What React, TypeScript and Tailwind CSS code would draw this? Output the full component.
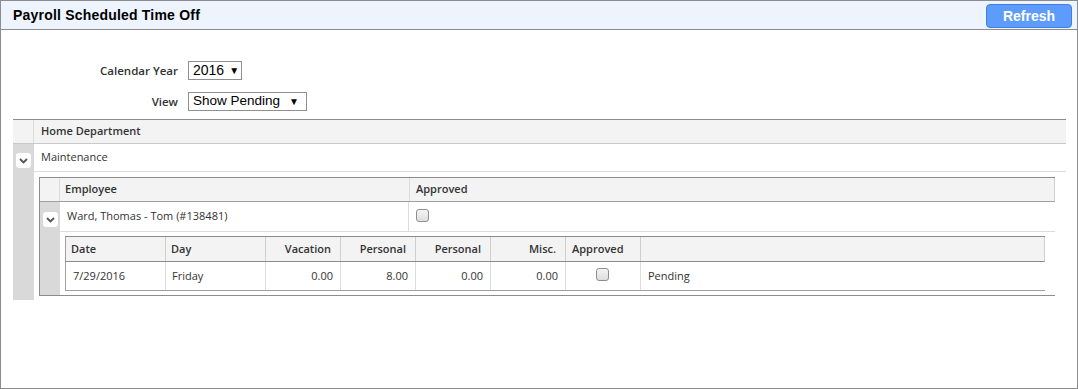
import React from "react";

const Chevron = ({ className }: { className: string }) => (
  <div className={`w-[15px] h-[15px] rounded-[3px] bg-white flex items-center justify-center ${className}`}>
    <svg width="9" height="6" viewBox="0 0 9 6">
      <path d="M1 1 L4.5 4.5 L8 1" fill="none" stroke="#555" strokeWidth="1.8" />
    </svg>
  </div>
);

const Checkbox = () => (
  <span className="inline-block w-[13px] h-[13px] rounded-[3px] border border-[#8f8f8f] bg-gradient-to-b from-[#f4f4f4] to-[#dedede]" />
);

export default function App() {
  const sans = "font-['Open_Sans',sans-serif]";
  const arial = "font-['Liberation_Sans',Arial,sans-serif]";
  return (
    <div className={`w-[1078px] h-[389px] border border-[#8c8c8c] bg-white overflow-hidden ${sans} text-[11px] text-[#333]`}>
      {/* header */}
      <div className="h-[29px] bg-[#edf4fe] border-b border-[#8c8c8c] flex items-start justify-between pl-[12px] pr-[5px]">
        <span className={`${arial} font-bold text-[14px] tracking-[0.2px] text-black leading-[29px]`}>Payroll Scheduled Time Off</span>
        <button className={`${arial} mt-[3px] w-[86px] h-[24px] rounded-[4px] bg-[#5e9cfb] border border-[#3f7fe6] text-white font-bold text-[14px] leading-[20px]`}>
          Refresh
        </button>
      </div>

      {/* form */}
      <div className="pt-[31px]">
        <div className="flex items-center">
          <div className="w-[177px] text-right font-semibold text-[11.5px]">Calendar Year</div>
          <div className={`${arial} ml-[10px] h-[19px] w-[54px] border border-[#8f8f8f] flex items-center pl-[4px] text-[14px] text-black`}>
            <span>2016</span>
            <span className="ml-[5px] text-[10px]">▼</span>
          </div>
        </div>
        <div className="flex items-center mt-[12px]">
          <div className="w-[177px] text-right font-semibold text-[11.5px]">View</div>
          <div className={`${arial} ml-[10px] h-[19px] w-[119px] border border-[#8f8f8f] flex items-center justify-between pl-[4px] pr-[7px] text-[13.5px] text-black`}>
            <span>Show Pending</span>
            <span className="text-[10px]">▼</span>
          </div>
        </div>
      </div>

      {/* outer grid */}
      <div className="mt-[8px] ml-[12px] mr-[11px]">
        <div className="h-[25px] border-t border-b border-t-[#8c8c8c] border-b-[#c8c8c8] bg-[#f3f3f3] flex">
          <div className="w-[21px] border-r border-[#dcdcdc]" />
          <div className="pl-[7px] font-semibold flex items-center">Home Department</div>
        </div>
        <div className="flex h-[28px]">
          <div className="w-[21px] bg-[#d9d9d9] pl-[3px] pt-[9px]">
            <Chevron className="" />
          </div>
          <div className="flex-1 border-b border-[#dcdcdc] pl-[7px] flex items-center">Maintenance</div>
        </div>
        <div className="flex">
          <div className="w-[21px] bg-[#d9d9d9]" />
          <div className="flex-1 pl-[5px] pr-[11px] pt-[5px] pb-[4px]">
            {/* inner grid */}
            <div className="border-l border-t border-b border-[#8c8c8c]">
              <div className="h-[24px] border-b border-[#a0a0a0] bg-[#f3f3f3] flex border-r border-r-[#cfcfcf]">
                <div className="w-[20px] border-r border-[#dcdcdc]" />
                <div className="w-[350px] border-r border-[#dcdcdc] pl-[5px] font-semibold flex items-center">Employee</div>
                <div className="pl-[6px] font-semibold flex items-center">Approved</div>
              </div>
              <div className="flex h-[30px]">
                <div className="w-[20px] bg-[#d9d9d9] pl-[3px] pt-[10px]">
                  <Chevron className="" />
                </div>
                <div className="flex-1 flex border-b border-[#dcdcdc]">
                  <div className="w-[349px] border-r border-[#dcdcdc] pl-[7px] flex items-center">Ward, Thomas - Tom (#138481)</div>
                  <div className="pl-[7px] pt-[7px]"><Checkbox /></div>
                </div>
              </div>
              <div className="flex">
                <div className="w-[20px] bg-[#d9d9d9]" />
                <div className="flex-1 pl-[5px] pr-[10px] pt-[4px] pb-[4px]">
                  {/* innermost grid */}
                  <div className="border-l border-t border-b border-l-[#a0a0a0] border-t-[#8c8c8c] border-b-[#a0a0a0]">
                    <div className="h-[25px] border-b border-[#8c8c8c] bg-[#f3f3f3] flex border-r border-r-[#cfcfcf] font-semibold">
                      <div className="w-[100px] border-r border-[#cfcfcf] pl-[5px] flex items-center">Date</div>
                      <div className="w-[100px] border-r border-[#cfcfcf] pl-[5px] flex items-center">Day</div>
                      <div className="w-[75px] border-r border-[#cfcfcf] pr-[9px] flex items-center justify-end">Vacation</div>
                      <div className="w-[75px] border-r border-[#cfcfcf] pr-[9px] flex items-center justify-end">Personal</div>
                      <div className="w-[75px] border-r border-[#cfcfcf] pr-[9px] flex items-center justify-end">Personal</div>
                      <div className="w-[75px] border-r border-[#cfcfcf] pr-[9px] flex items-center justify-end">Misc.</div>
                      <div className="w-[75px] border-r border-[#cfcfcf] pl-[6px] flex items-center">Approved</div>
                      <div className="flex-1" />
                    </div>
                    <div className="h-[28px] flex">
                      <div className="w-[100px] border-r border-[#dcdcdc] pl-[7px] flex items-center">7/29/2016</div>
                      <div className="w-[100px] border-r border-[#dcdcdc] pl-[6px] flex items-center">Friday</div>
                      <div className="w-[75px] border-r border-[#dcdcdc] pr-[7px] flex items-center justify-end">0.00</div>
                      <div className="w-[75px] border-r border-[#dcdcdc] pr-[7px] flex items-center justify-end">8.00</div>
                      <div className="w-[75px] border-r border-[#dcdcdc] pr-[7px] flex items-center justify-end">0.00</div>
                      <div className="w-[75px] border-r border-[#dcdcdc] pr-[7px] flex items-center justify-end">0.00</div>
                      <div className="w-[75px] border-r border-[#dcdcdc] flex justify-center pt-[6px] pr-[2px]"><Checkbox /></div>
                      <div className="flex-1 pl-[7px] flex items-center">Pending</div>
                    </div>
                  </div>
                </div>
              </div>
            </div>
          </div>
        </div>
      </div>
    </div>
  );
}
